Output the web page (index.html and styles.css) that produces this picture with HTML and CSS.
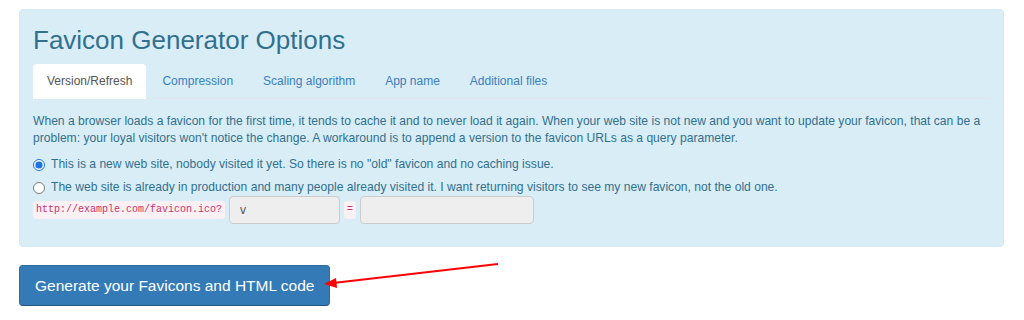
FILE: index.html
```html
<!DOCTYPE html>
<html lang="en">

<head>
    <meta charset="UTF-8">
    <title>Favicon Generator Options</title>
    <link rel="stylesheet" href="styles.css">
</head>

<body>
    <!-- Options panel -->
    <section class="options-panel">
        <h2>Favicon Generator Options</h2>

        <ul class="tabs">
            <li class="active"><a href="#version">Version/Refresh</a></li>
            <li><a href="#compression">Compression</a></li>
            <li><a href="#scaling">Scaling algorithm</a></li>
            <li><a href="#app-name">App name</a></li>
            <li><a href="#files">Additional files</a></li>
        </ul>

        <div class="tab-pane">
            <p>When a browser loads a favicon for the first time, it tends to cache it and to never load it again. When your web site is not new and you want to update your favicon, that can be a problem: your loyal visitors won't notice the change. A workaround is to append a version to the favicon URLs as a query parameter.</p>

            <label class="radio">
                <input type="radio" name="refresh" checked>
                This is a new web site, nobody visited it yet. So there is no "old" favicon and no caching issue.
            </label>
            <label class="radio">
                <input type="radio" name="refresh">
                The web site is already in production and many people already visited it. I want returning visitors to see my new favicon, not the old one.
            </label>

            <div class="version-row">
                <code>http://example.com/favicon.ico?</code>
                <input class="field field-param" type="text" value="v" disabled>
                <code>=</code>
                <input class="field field-value" type="text" disabled>
            </div>
        </div>
    </section>

    <!-- Generate button + annotation arrow -->
    <div class="actions">
        <button class="generate-btn">Generate your Favicons and HTML code</button>
        <svg class="arrow" width="180" height="30" viewBox="0 0 180 30">
            <line x1="177" y1="2" x2="12" y2="21" stroke="#ff0000" stroke-width="2" />
            <polygon points="3,22 15,16 16,26" fill="#ff0000" />
        </svg>
    </div>
</body>

</html>
```

FILE: styles.css
```css
/* General Styles */
body {
    font-family: 'Liberation Sans', Arial, sans-serif;
    font-size: 12px;
    line-height: 17px;
    margin: 0;
    padding: 9px 20px 0 19px;
    background-color: #fff;
    color: #333;
}

h2, p, ul {
    margin: 0;
    padding: 0;
}

a {
    text-decoration: none;
    color: #337ab7;
}

/* Options panel */
.options-panel {
    background-color: #d9edf7;
    border: 1px solid #d3eaf5;
    border-radius: 4px;
    padding: 16px 13px 22px;
    color: #31708f;
}

.options-panel h2 {
    font-size: 26px;
    font-weight: 400;
    line-height: 29px;
    margin-bottom: 9px;
}

/* Tabs */
.tabs {
    list-style: none;
    display: flex;
    border-bottom: 1px solid #dfe7ea;
}

.tabs li {
    margin-right: 2px;
    margin-bottom: -1px;
}

.tabs a {
    display: block;
    padding: 8px 13px;
    border: 1px solid transparent;
    border-radius: 4px 4px 0 0;
    color: #3a80bd;
}

.tabs li.active a {
    background-color: #fff;
    border-color: #fff #fff transparent;
    color: #555;
}

/* Tab content */
.tab-pane {
    padding-top: 14px;
    font-size: 12.1px;
}

.tab-pane p {
    margin-bottom: 9px;
}

.radio {
    display: flex;
    align-items: center;
    margin-bottom: 6px;
}

.radio:last-of-type {
    margin-bottom: 0;
}

.radio input {
    width: 12px;
    height: 12px;
    margin: 0 6px 0 0;
    accent-color: #1a73e8;
}

.version-row {
    display: flex;
    align-items: center;
    gap: 4px;
}

.version-row code {
    font-family: 'Liberation Mono', 'Courier New', monospace;
    font-size: 10px;
    line-height: 14px;
    padding: 2px 3px;
    color: #d0306a;
    background-color: #fbf0f4;
    border-radius: 3px;
}

.field {
    height: 28px;
    box-sizing: border-box;
    padding: 0 10px;
    border: 1px solid #ccc;
    border-radius: 4px;
    background-color: #eee;
    color: #555;
    font-family: 'Liberation Sans', Arial, sans-serif;
    font-size: 12px;
}

.field-param {
    width: 111px;
}

.field-value {
    width: 174px;
}

/* Generate button */
.actions {
    position: relative;
    margin-top: 18px;
}

.generate-btn {
    font-family: 'Liberation Sans', Arial, sans-serif;
    font-size: 15.5px;
    height: 41px;
    padding: 0 15px;
    color: #fff;
    background-color: #337ab7;
    border: 1px solid #2e6da4;
    border-bottom-color: #24557f;
    border-radius: 4px;
    cursor: pointer;
}

.arrow {
    position: absolute;
    left: 302px;
    top: -3px;
}
```
